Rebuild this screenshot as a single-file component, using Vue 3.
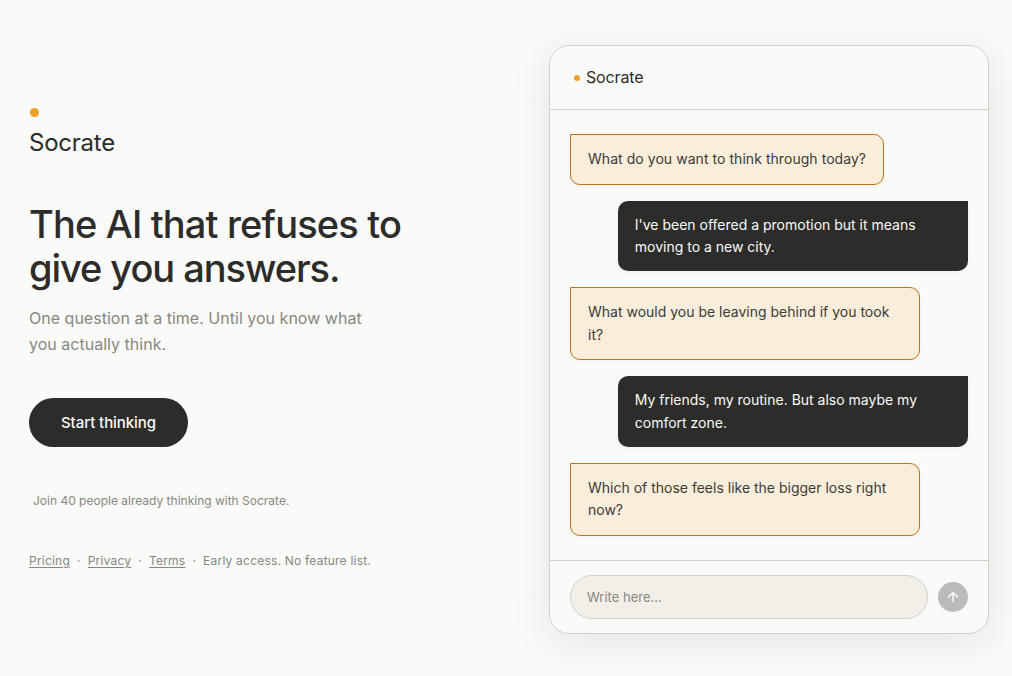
<template>
  <main class="landing">
    <section class="hero">
      <div class="brand">
        <span class="brand-dot" />
        <span class="brand-name">Socrate</span>
      </div>
      <h1 class="title">The AI that refuses to<br /><span class="title-end">give you answers.</span></h1>
      <p class="subtitle">One question at a time. Until you know what<br />you actually think.</p>
      <button class="cta" type="button">Start thinking</button>
      <p class="proof">Join 40 people already thinking with Socrate.</p>
      <footer class="links">
        <template v-for="link in links" :key="link">
          <a href="#">{{ link }}</a>
          <span class="sep">·</span>
        </template>
        <span>Early access. No feature list.</span>
      </footer>
    </section>

    <section class="chat">
      <header class="chat-header">
        <span class="chat-dot" />
        <span class="chat-name">Socrate</span>
      </header>
      <div class="messages">
        <div v-for="(m, i) in messages" :key="i" class="bubble" :class="`bubble--${m.from}`">
          {{ m.text }}
        </div>
      </div>
      <form class="composer" @submit.prevent>
        <input v-model="draft" class="field" type="text" placeholder="Write here..." />
        <button class="send" type="submit" aria-label="Send" :disabled="!draft">
          <svg width="14" height="14" viewBox="0 0 14 14" fill="none">
            <path
              d="M7 11.6V2.6M2.6 6.9L7 2.5l4.4 4.4"
              stroke="currentColor"
              stroke-width="1.5"
              stroke-linecap="round"
              stroke-linejoin="round"
            />
          </svg>
        </button>
      </form>
    </section>
  </main>
</template>

<script setup>
import { ref } from 'vue'

const draft = ref('')

const links = ['Pricing', 'Privacy', 'Terms']

const messages = [
  { from: 'ai', text: 'What do you want to think through today?' },
  { from: 'user', text: "I've been offered a promotion but it means moving to a new city." },
  { from: 'ai', text: 'What would you be leaving behind if you took it?' },
  { from: 'user', text: 'My friends, my routine. But also maybe my comfort zone.' },
  { from: 'ai', text: 'Which of those feels like the bigger loss right now?' }
]
</script>

<style>
body {
  margin: 0;
  background: #fafaf8;
}
</style>

<style scoped>
.landing {
  box-sizing: border-box;
  height: 676px;
  padding: 45.2px 23px 0 29px;
  display: flex;
  justify-content: space-between;
  align-items: flex-start;
  overflow: hidden;
  background: #fafaf8;
  color: #2c2c2a;
  font-family: Inter, sans-serif;
}

.hero {
  display: flex;
  flex-direction: column;
  align-items: flex-start;
  padding-top: 62.8px;
}

.brand {
  display: flex;
  flex-direction: column;
  gap: 10px;
}

.brand-dot {
  width: 9px;
  height: 9px;
  margin-left: 1px;
  border-radius: 50%;
  background: #ef9f27;
}

.brand-name {
  font-size: 24px;
  line-height: 31px;
  letter-spacing: -0.01em;
}

.title {
  margin: 44px 0 0;
  font-size: 38px;
  font-weight: 500;
  line-height: 44px;
  letter-spacing: -0.022em;
}

.title-end {
  letter-spacing: -0.028em;
}

.subtitle {
  margin: 15px 0 0;
  color: #888780;
  font-size: 16px;
  line-height: 26px;
  letter-spacing: 0.001em;
}

.cta {
  height: 49px;
  margin-top: 41px;
  padding: 0 32px;
  border: 0;
  border-radius: 25px;
  background: #2c2c2a;
  color: #fafaf8;
  font-family: inherit;
  font-size: 15px;
  font-weight: 500;
  letter-spacing: -0.005em;
}

.proof {
  margin: 44px 0 0 4px;
  color: #888780;
  font-size: 12px;
  line-height: 20px;
}

.links {
  display: flex;
  margin-top: 40px;
  color: #888780;
  font-size: 12px;
  line-height: 20px;
  letter-spacing: 0.018em;
}

.links a {
  color: inherit;
  text-decoration: underline;
  text-underline-offset: 2px;
}

.sep {
  margin: 0 7px;
}

.chat {
  width: 438px;
  border: 1px solid #d3d1c7;
  border-radius: 20px;
  background: #fafaf8;
  box-shadow: 0 8px 40px rgba(44, 44, 42, 0.1);
}

.chat-header {
  display: flex;
  align-items: center;
  gap: 6px;
  height: 63px;
  padding-left: 24px;
  border-bottom: 1px solid #d3d1c7;
}

.chat-dot {
  width: 6px;
  height: 6px;
  border-radius: 50%;
  background: #ef9f27;
}

.chat-name {
  padding-bottom: 2px;
  font-size: 16px;
  letter-spacing: -0.01em;
}

.messages {
  display: flex;
  flex-direction: column;
  gap: 16px;
  padding: 24px 20px;
}

.bubble {
  box-sizing: border-box;
  max-width: 88%;
  padding: 13px 17px;
  font-size: 14px;
  line-height: 1.6;
  box-shadow: 0 1px 4px rgba(44, 44, 42, 0.06);
}

.bubble--ai {
  align-self: flex-start;
  border: 1px solid #ba7517;
  border-radius: 0 10px 10px 10px;
  background: #faeeda;
  color: #3a3a37;
}

.bubble--ai:first-child {
  letter-spacing: 0.0036em;
}

.bubble--user {
  align-self: flex-end;
  border-radius: 10px 0 10px 10px;
  background: #2c2c2a;
  color: #fafaf8;
}

.composer {
  display: flex;
  align-items: center;
  gap: 10px;
  padding: 14px 20px;
  border-top: 1px solid #d3d1c7;
}

.field {
  box-sizing: border-box;
  flex: 1;
  min-width: 0;
  height: 44px;
  padding: 0 16px;
  border: 1px solid #d3d1c7;
  border-radius: 22px;
  background: #f1efe8;
  color: #2c2c2a;
  font-family: inherit;
  font-size: 13px;
}

.field::placeholder {
  color: #888780;
}

.send {
  display: flex;
  align-items: center;
  justify-content: center;
  width: 30px;
  height: 30px;
  padding: 0;
  border: 0;
  border-radius: 50%;
  background: #2c2c2a;
  color: #fafaf8;
}

.send:disabled {
  opacity: 0.3;
}
</style>
